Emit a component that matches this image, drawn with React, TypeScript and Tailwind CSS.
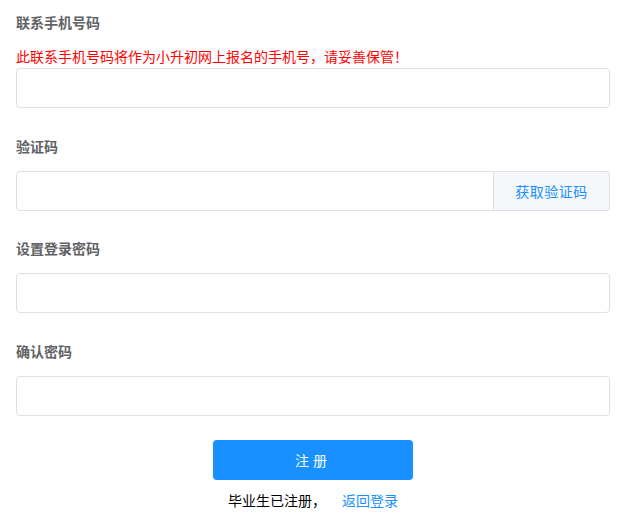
import { useState } from "react";

const font = { fontFamily: '"Noto Sans CJK SC", "Liberation Sans", sans-serif' };

const inputCls =
  "w-full h-10 px-[15px] rounded border border-[#dcdfe6] bg-white text-sm text-[#606266] outline-none focus:border-[#1890ff]";

function Label({ children }: { children: React.ReactNode }) {
  return (
    <div className="h-[34px] leading-[34px] text-sm font-bold text-[#606266]">
      {children}
    </div>
  );
}

export default function App() {
  const [phone, setPhone] = useState("");
  const [code, setCode] = useState("");
  const [pwd, setPwd] = useState("");
  const [pwd2, setPwd2] = useState("");

  return (
    <div className="w-[626px] h-[520px] bg-white px-4 pt-[5px]" style={font}>
      {/* 联系手机号码 */}
      <div className="mb-[21px]">
        <Label>联系手机号码</Label>
        <div className="mt-[7px] mb-[2px] h-5 leading-5 text-sm text-[#ff0000]">
          此联系手机号码将作为小升初网上报名的手机号，请妥善保管！
        </div>
        <input className={inputCls} value={phone} onChange={(e) => setPhone(e.target.value)} />
      </div>

      {/* 验证码 */}
      <div className="mb-5">
        <Label>验证码</Label>
        <div className="mt-2 flex h-10">
          <input
            className="flex-1 h-10 px-[15px] rounded-l border border-[#dcdfe6] bg-white text-sm text-[#606266] outline-none"
            value={code}
            onChange={(e) => setCode(e.target.value)}
          />
          <button className="w-[116px] h-10 rounded-r border border-l-0 border-[#dcdfe6] bg-[#f5f7fa] text-sm text-[#1890ff] tracking-[0.5px]">
            获取验证码
          </button>
        </div>
      </div>

      {/* 设置登录密码 */}
      <div className="mb-[21px]">
        <Label>设置登录密码</Label>
        <input
          type="password"
          className={`${inputCls} mt-2`}
          value={pwd}
          onChange={(e) => setPwd(e.target.value)}
        />
      </div>

      {/* 确认密码 */}
      <div className="mb-6">
        <Label>确认密码</Label>
        <input
          type="password"
          className={`${inputCls} mt-2`}
          value={pwd2}
          onChange={(e) => setPwd2(e.target.value)}
        />
      </div>

      <div className="flex justify-center">
        <button className="w-[200px] h-10 rounded bg-[#1890ff] text-sm text-white tracking-[4px]">
          注册
        </button>
      </div>

      <div className="mt-[10px] text-center text-sm leading-5 text-[#000000]">
        毕业生已注册，
        <a href="#" className="ml-4 text-[#1890ff]">
          返回登录
        </a>
      </div>
    </div>
  );
}
